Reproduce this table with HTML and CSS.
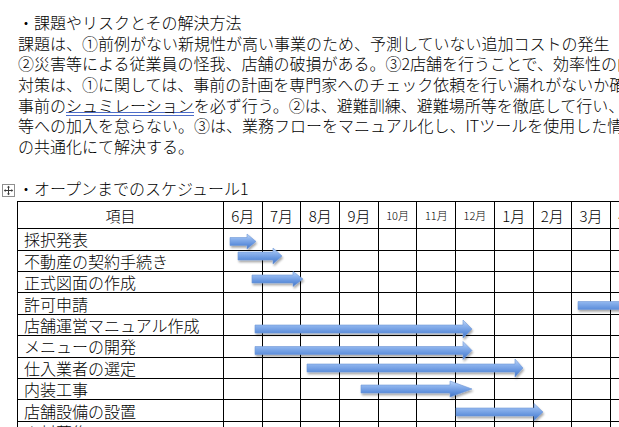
FILE: index.html
```html
<!DOCTYPE html>
<html lang="ja">
<head>
<meta charset="utf-8">
<title>課題やリスクとその解決方法</title>
<link rel="stylesheet" href="styles.css">
</head>
<body>
<div class="doc">
  <p class="line">・課題やリスクとその解決方法</p>
  <p class="line">課題は、①前例がない新規性が高い事業のため、予測していない追加コストの発生</p>
  <p class="line">②災害等による従業員の怪我、店舗の破損がある。③2店舗を行うことで、効率性の向上</p>
  <p class="line">対策は、①に関しては、事前の計画を専門家へのチェック依頼を行い漏れがないか確認し、</p>
  <p class="line">事前の<span class="grammar">シュミレーション</span>を必ず行う。②は、避難訓練、避難場所等を徹底して行い、保険</p>
  <p class="line">等への加入を怠らない。③は、業務フローをマニュアル化し、ITツールを使用した情報</p>
  <p class="line">の共通化にて解決する。</p>
  <p class="line"></p>
  <p class="line heading"><svg class="handle" viewBox="0 0 13 13" aria-hidden="true"><rect x="0.5" y="0.5" width="12" height="12" fill="#fff" stroke="#8f8f8f"/><path d="M6.5 3V10M3 6.5H10" stroke="#3c3c3c" stroke-width="1" fill="none"/><path d="M6.5 1.8L4.9 3.6H8.1Z M6.5 11.2L4.9 9.4H8.1Z M1.8 6.5L3.6 4.9V8.1Z M11.2 6.5L9.4 4.9V8.1Z" fill="#3c3c3c"/></svg>・オープンまでのスケジュール1</p>

  <div class="gantt">
    <div class="grid">
      <div class="cell head">項目</div>
      <div class="cell head">6月</div><div class="cell head">7月</div><div class="cell head">8月</div><div class="cell head">9月</div>
      <div class="cell head small">10月</div><div class="cell head small">11月</div><div class="cell head small">12月</div>
      <div class="cell head">1月</div><div class="cell head">2月</div><div class="cell head">3月</div><div class="cell head">4月</div><div class="cell head">5月</div>

      <div class="cell label">採択発表</div>
      <div class="cell"></div><div class="cell"></div><div class="cell"></div><div class="cell"></div><div class="cell"></div><div class="cell"></div><div class="cell"></div><div class="cell"></div><div class="cell"></div><div class="cell"></div><div class="cell"></div><div class="cell"></div>

      <div class="cell label">不動産の契約手続き</div>
      <div class="cell"></div><div class="cell"></div><div class="cell"></div><div class="cell"></div><div class="cell"></div><div class="cell"></div><div class="cell"></div><div class="cell"></div><div class="cell"></div><div class="cell"></div><div class="cell"></div><div class="cell"></div>

      <div class="cell label">正式図面の作成</div>
      <div class="cell"></div><div class="cell"></div><div class="cell"></div><div class="cell"></div><div class="cell"></div><div class="cell"></div><div class="cell"></div><div class="cell"></div><div class="cell"></div><div class="cell"></div><div class="cell"></div><div class="cell"></div>

      <div class="cell label">許可申請</div>
      <div class="cell"></div><div class="cell"></div><div class="cell"></div><div class="cell"></div><div class="cell"></div><div class="cell"></div><div class="cell"></div><div class="cell"></div><div class="cell"></div><div class="cell"></div><div class="cell"></div><div class="cell"></div>

      <div class="cell label">店舗運営マニュアル作成</div>
      <div class="cell"></div><div class="cell"></div><div class="cell"></div><div class="cell"></div><div class="cell"></div><div class="cell"></div><div class="cell"></div><div class="cell"></div><div class="cell"></div><div class="cell"></div><div class="cell"></div><div class="cell"></div>

      <div class="cell label">メニューの開発</div>
      <div class="cell"></div><div class="cell"></div><div class="cell"></div><div class="cell"></div><div class="cell"></div><div class="cell"></div><div class="cell"></div><div class="cell"></div><div class="cell"></div><div class="cell"></div><div class="cell"></div><div class="cell"></div>

      <div class="cell label">仕入業者の選定</div>
      <div class="cell"></div><div class="cell"></div><div class="cell"></div><div class="cell"></div><div class="cell"></div><div class="cell"></div><div class="cell"></div><div class="cell"></div><div class="cell"></div><div class="cell"></div><div class="cell"></div><div class="cell"></div>

      <div class="cell label">内装工事</div>
      <div class="cell"></div><div class="cell"></div><div class="cell"></div><div class="cell"></div><div class="cell"></div><div class="cell"></div><div class="cell"></div><div class="cell"></div><div class="cell"></div><div class="cell"></div><div class="cell"></div><div class="cell"></div>

      <div class="cell label">店舗設備の設置</div>
      <div class="cell"></div><div class="cell"></div><div class="cell"></div><div class="cell"></div><div class="cell"></div><div class="cell"></div><div class="cell"></div><div class="cell"></div><div class="cell"></div><div class="cell"></div><div class="cell"></div><div class="cell"></div>

      <div class="cell label">人材募集</div>
      <div class="cell"></div><div class="cell"></div><div class="cell"></div><div class="cell"></div><div class="cell"></div><div class="cell"></div><div class="cell"></div><div class="cell"></div><div class="cell"></div><div class="cell"></div><div class="cell"></div><div class="cell"></div>
    </div>

    <svg class="bars" width="700" height="240" aria-hidden="true">
      <defs>
        <linearGradient id="blue" x1="0" y1="0" x2="0" y2="1">
          <stop offset="0" stop-color="#c4daf7"/>
          <stop offset="0.3" stop-color="#8fb5ee"/>
          <stop offset="0.7" stop-color="#5f90dc"/>
          <stop offset="1" stop-color="#4676c4"/>
        </linearGradient>
        <filter id="shadow" x="-5%" y="-30%" width="115%" height="180%">
          <feDropShadow dx="1" dy="2" stdDeviation="1" flood-color="#000" flood-opacity="0.35"/>
        </filter>
      </defs>
      <g transform="translate(-17,-201)" fill="url(#blue)" stroke="#6f97d6" stroke-width="0.6" filter="url(#shadow)">
        <path d="M230 237.5H247V234L256 241.5L247 249V245.5H230Z"/>
        <path d="M238 252H273V248L282 256L273 264V260H238Z"/>
        <path d="M252 275H293V271.5L303 279L293 286.5V283H252Z"/>
        <path d="M578 301.5H690V297L700 305.5L690 314V309.5H578Z"/>
        <path d="M255 325H463V320L472 329L463 338V333H255Z"/>
        <path d="M255 346.5H463V341.5L472 350.5L463 359.5V354.5H255Z"/>
        <path d="M307 364H515V359L523 368L515 377V372H307Z"/>
        <path d="M361 385H450V381L472 389L450 397V393H361Z"/>
        <path d="M456 408H534V403.5L543 412L534 420.5V416H456Z"/>
      </g>
    </svg>
  </div>
</div>
</body>
</html>
```

FILE: styles.css
```css
html,
body {
  margin: 0;
  padding: 0;
  overflow: hidden;
  background: #fff;
}

body {
  width: 619px;
  height: 427px;
  color: #000;
  font-family: "Noto Sans CJK JP", "Noto Sans", sans-serif;
  font-weight: 300;
}

.doc {
  padding-top: 12px;
}

.line {
  margin: 0;
  padding-left: 18px;
  height: 20.7px;
  font-size: 16px;
  line-height: 20.7px;
  white-space: nowrap;
}

.heading {
  position: relative;
}

.handle {
  position: absolute;
  left: 2px;
  top: 6px;
  width: 13px;
  height: 13px;
}

.grammar {
  background-image:
    linear-gradient(#4d6cc8, #4d6cc8),
    linear-gradient(#4d6cc8, #4d6cc8);
  background-repeat: no-repeat;
  background-size: 100% 1px, 100% 1px;
  background-position: 0 19px, 0 22px;
}

.gantt {
  position: relative;
  width: max-content;
  margin: 3px 0 0 17px;
}

.grid {
  display: grid;
  grid-template-columns: 205px repeat(12, 37.7px);
  grid-template-rows: 26px repeat(10, 20.4px);
  gap: 1px;
  background: #000;
  border: 1px solid #000;
}

.cell {
  display: flex;
  align-items: center;
  justify-content: center;
  overflow: hidden;
  background: #fff;
  white-space: nowrap;
  font-size: 15px;
  line-height: 1;
}

.small {
  font-size: 11px;
}

.label {
  justify-content: flex-start;
  padding-left: 6px;
  font-size: 16px;
}

.bars {
  position: absolute;
  left: 0;
  top: 0;
  overflow: visible;
  pointer-events: none;
}
```
